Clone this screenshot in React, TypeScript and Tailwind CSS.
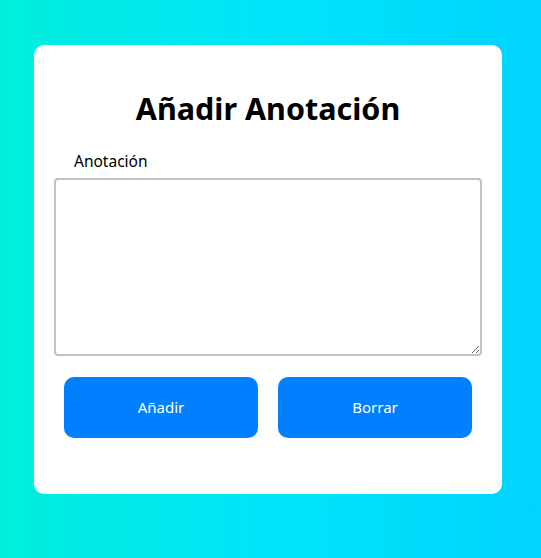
import { useState } from "react";

const App = () => {
  const [nota, setNota] = useState("");

  return (
    <div
      className="min-h-screen w-full flex justify-center pt-[45px] pr-[5px] bg-[linear-gradient(to_right,#00efdc,#00e4fa_50%,#00d4ff)]"
      style={{ fontFamily: '"Noto Sans", "Open Sans", sans-serif' }}
    >
      <div className="w-[468px] h-[449px] bg-white rounded-[10px] px-[20px] pt-[43px]">
        {/* TITULO */}
        <h1 className="text-center text-[30.5px] leading-[40px] font-bold text-black">
          Añadir Anotación
        </h1>

        {/* FORMULARIO */}
        <label className="block mt-[22px] pl-[20px] text-[15.5px] leading-[22px] text-black">
          Anotación
        </label>
        <textarea
          value={nota}
          onChange={(e) => setNota(e.target.value)}
          className="block mt-[6px] w-full h-[178px] border-2 border-[#c2c2c2] rounded-[4px] p-2 outline-none"
        />

        <div className="flex mt-[21px]">
          <button
            className="flex-1 mx-[10px] h-[61px] rounded-[10px] bg-[#007fff] text-white text-[15px]"
            onClick={() => {}}
          >
            Añadir
          </button>
          <button
            className="flex-1 mx-[10px] h-[61px] rounded-[10px] bg-[#007fff] text-white text-[15px]"
            onClick={() => setNota("")}
          >
            Borrar
          </button>
        </div>
      </div>
    </div>
  );
};

export default App;
